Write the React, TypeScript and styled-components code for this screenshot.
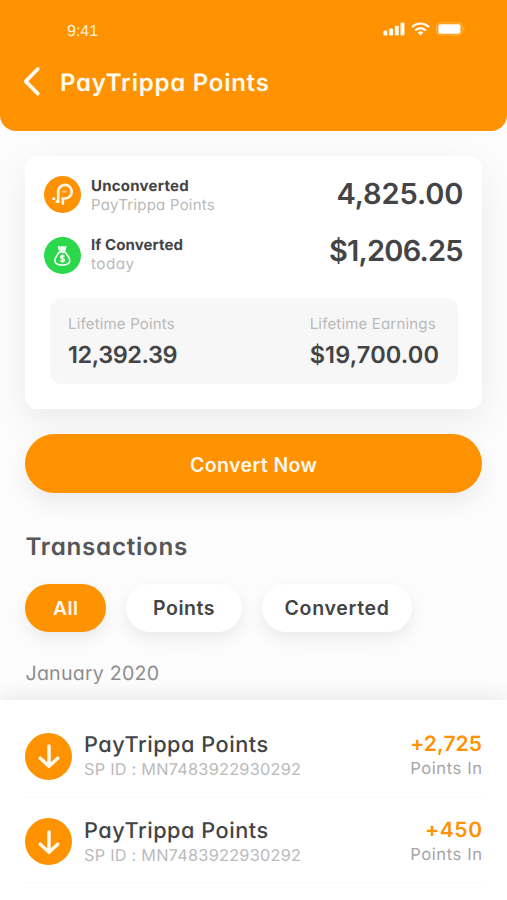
import React from "react";
import styled, { createGlobalStyle } from "styled-components";

const orange = "#ff9200";
const ink = "#434446";

const GlobalStyle = createGlobalStyle`
  * { box-sizing: border-box; }
  body {
    margin: 0;
    background: #fcfcfc;
    font-family: Inter, "Open Sans", sans-serif;
    font-feature-settings: "cv11";
    text-rendering: geometricPrecision;
    color: ${ink};
  }
  button { border: 0; padding: 0; background: none; font: inherit; font-feature-settings: inherit; color: inherit; }
  svg { display: block; flex: none; }
`;

const Screen = styled.main`
  width: 507px;
  height: 900px;
  overflow: hidden;
  display: flex;
  flex-direction: column;
`;

const Label = styled.span<{
  $size: number;
  $line: number;
  $weight?: number;
  $color?: string;
  $track?: number;
}>`
  display: block;
  white-space: nowrap;
  font-size: ${(p) => p.$size}px;
  line-height: ${(p) => p.$line}px;
  font-weight: ${(p) => p.$weight ?? 400};
  color: ${(p) => p.$color ?? ink};
  letter-spacing: ${(p) => p.$track ?? 0}px;
  margin-right: ${(p) => -(p.$track ?? 0)}px;
`;

const Header = styled.header`
  height: 131px;
  flex: none;
  background: ${orange};
  border-radius: 0 0 16px 16px;
`;

const StatusBar = styled.div`
  height: 63px;
  padding: 0 42px 0 67px;
  display: flex;
  justify-content: space-between;
  align-items: center;
`;

const Clock = styled.span`
  font: 16px/20px "Liberation Sans", sans-serif;
  color: #fff4dc;
`;

const StatusIcons = styled.div`
  display: flex;
  align-items: center;
  gap: 6px;
  margin-top: -5px;
`;

const TitleBar = styled.div`
  height: 40px;
  padding-left: 22px;
  display: flex;
  align-items: center;
  gap: 19px;
`;

const Title = styled.h1`
  margin: 0;
`;

const BackButton = styled.button`
  width: 19px;
  height: 32px;
  margin-top: -4px;
`;

const Body = styled.section`
  padding: 25px 25px 0;
  height: 568.5px;
  flex: none;
  display: flex;
  flex-direction: column;
`;

const SummaryCard = styled.div`
  height: 252.5px;
  flex: none;
  padding: 0 18.5px;
  background: #fff;
  border-radius: 12px;
  box-shadow: 0 12px 36px rgba(0, 0, 0, 0.07);
`;

const BalanceRow = styled.div<{ $height: number; $top: number }>`
  height: ${(p) => p.$height}px;
  padding-top: ${(p) => p.$top}px;
  display: flex;
  align-items: flex-start;
`;

const Badge = styled.div<{ $color: string; $drop: number }>`
  width: 37px;
  height: 37px;
  margin-top: ${(p) => p.$drop}px;
  border-radius: 50%;
  background: ${(p) => p.$color};
  overflow: hidden;
`;

const BalanceNames = styled.div`
  margin-left: 10.5px;
  flex: 1;
`;

const Lifetime = styled.div`
  height: 86px;
  margin: 0 6px 0 6.5px;
  padding: 16px 18.5px 0 18px;
  display: flex;
  justify-content: space-between;
  background: #f7f7f7;
  border-radius: 12px;
`;

const ConvertButton = styled.button`
  height: 59px;
  flex: none;
  margin-top: 25.5px;
  display: flex;
  justify-content: center;
  padding-top: 21px;
  border-radius: 30px;
  background: ${orange};
  box-shadow: 0 10px 22px rgba(0, 0, 0, 0.07);
`;

const SectionTitle = styled.h2`
  margin: 39px 0 0 0.5px;
  height: 51.5px;
`;

const Filters = styled.div`
  display: flex;
  gap: 19.5px;
`;

const Pill = styled.button<{ $width: number; $active?: boolean }>`
  width: ${(p) => p.$width}px;
  height: 48px;
  display: flex;
  align-items: center;
  justify-content: center;
  border-radius: 24px;
  background: ${(p) => (p.$active ? orange : "#fff")};
  box-shadow: 0 7px 16px rgba(0, 0, 0, 0.07);
`;

const Month = styled.div`
  margin: 29.5px 0 0 0.5px;
`;

const Transactions = styled.section`
  flex: 1;
  padding: 12.5px 25px 0;
  background: #fff;
  box-shadow: 0 -4px 18px rgba(0, 0, 0, 0.08);
`;

const TransactionRow = styled.div`
  height: 85.5px;
  padding-top: 20px;
  display: flex;
  align-items: flex-start;
  border-bottom: 1px solid #fafafa;
`;

const ArrowBadge = styled.div`
  width: 47px;
  height: 47px;
  margin-top: 0.75px;
  display: grid;
  place-items: center;
  border-radius: 50%;
  background: ${orange};
`;

const TransactionText = styled.div`
  flex: 1;
  margin-left: 12px;
`;

const Amount = styled.div`
  display: flex;
  flex-direction: column;
  align-items: flex-end;
`;

function Signal() {
  return (
    <svg width="22" height="14" viewBox="0 0 22 14" fill="#fffaf0">
      <rect x="0.4" y="8.5" width="4" height="5" rx="1.2" />
      <rect x="6.1" y="6.5" width="4" height="7" rx="1.2" />
      <rect x="11.8" y="3.8" width="4" height="9.7" rx="1.2" />
      <rect x="17.5" y="0.5" width="4" height="13" rx="1.2" />
    </svg>
  );
}

function Wifi() {
  return (
    <svg width="19" height="14" viewBox="0 0 19 14" fill="none" stroke="#fffaf0" strokeWidth="2.4">
      <path d="M1 5.2a12 12 0 0 1 17 0" />
      <path d="M4.1 8.5a7.6 7.6 0 0 1 10.8 0" />
      <path d="M9.5 13.5 6.6 10.6a4.1 4.1 0 0 1 5.8 0Z" fill="#fffaf0" stroke="none" />
    </svg>
  );
}

function Battery() {
  return (
    <svg width="29" height="14" viewBox="0 0 29 14">
      <rect x="0.6" y="0.9" width="25.6" height="12.2" rx="3.4" fill="none" stroke="#ffb84f" strokeWidth="1" />
      <rect x="2.3" y="2.3" width="22.2" height="9.4" rx="1.8" fill="#fff" />
      <path d="M27.3 5v4c1.6-.7 1.6-3.300 0-4Z" fill="#ffb84f" />
    </svg>
  );
}

function BrandMark() {
  return (
    <svg width="37" height="37" viewBox="0 0 112 112" fill="none" stroke="#fff5e2" strokeWidth="8">
      <path d="M43 82V48a20.500 20.500 0 1 1 21 20h-7V87" />
      <path d="M54 50v-5h15v5Z" fill="#ffc982" stroke="none" />
      <path d="M25 69h9M35 78h8" />
    </svg>
  );
}

function MoneyBag() {
  return (
    <svg width="37" height="37" viewBox="0 0 112 112" fill="none" stroke="#f1fff2" strokeWidth="5" strokeLinejoin="round">
      <path d="M43 28l6 3 6-3 6 3 6-3-3 12H46Z" fill="#f1fff2" strokeWidth="3" />
      <path d="M45 43h20M46 46C41 53 33 61 33 72c0 10 8 13 22 13s23-3 23-13c0-11-9-19-14-26Z" />
      <path d="M62 59c-3-3-12-3-12 2 0 6 12 3 12 9 0 5-9 5-13 1M56 53v25" strokeWidth="4.5" />
    </svg>
  );
}

function DownArrow() {
  return (
    <svg width="24" height="26" viewBox="0 0 24 26" fill="none" stroke="#fff8ec" strokeWidth="3.5" strokeLinecap="round" strokeLinejoin="round">
      <path d="M12 3v20M3.3 15.2l8.700 8.100 8.700-8.100" />
    </svg>
  );
}

const transactions = [
  { amount: "+2,725", track: 0.1 },
  { amount: "+450", track: 0.6 },
];

export default function App() {
  return (
    <Screen>
      <GlobalStyle />
      <Header>
        <StatusBar>
          <Clock>9:41</Clock>
          <StatusIcons>
            <Signal />
            <Wifi />
            <Battery />
          </StatusIcons>
        </StatusBar>
        <TitleBar>
          <BackButton aria-label="Back">
            <svg width="19" height="32" viewBox="0 0 19 32" fill="none" stroke="#fff8ec" strokeWidth="3.8" strokeLinecap="round" strokeLinejoin="round">
              <path d="M15.8 4 3.7 16.3 15.8 28.6" />
            </svg>
          </BackButton>
          <Title>
            <Label $size={24} $line={30} $weight={600} $color="#fffaf0" $track={0.76}>PayTrippa Points</Label>
          </Title>
        </TitleBar>
      </Header>

      <Body>
        <SummaryCard>
          <BalanceRow $height={77} $top={19}>
            <Badge $color={orange} $drop={0.5}>
              <BrandMark />
            </Badge>
            <BalanceNames>
              <Label $size={15} $line={22} $weight={700} $track={0.24}>Unconverted</Label>
              <Label $size={15} $line={16} $color="#b9b9b9" $track={0.22}>PayTrippa Points</Label>
            </BalanceNames>
            <Label $size={29} $line={37} $weight={600} $track={-0.08}>4,825.00</Label>
          </BalanceRow>
          <BalanceRow $height={65} $top={0}>
            <Badge $color="#2bd84c" $drop={4}>
              <MoneyBag />
            </Badge>
            <BalanceNames>
              <Label $size={15} $line={24} $weight={700} $track={0.1}>If Converted</Label>
              <Label $size={15.3} $line={13} $color="#b9b9b9" $track={0.45}>today</Label>
            </BalanceNames>
            <Label $size={29} $line={36} $weight={600} $track={-0.78}>$1,206.25</Label>
          </BalanceRow>
          <Lifetime>
            <div>
              <Label $size={15} $line={20} $color="#b9b9b9" $track={0.17}>Lifetime Points</Label>
              <Label $size={23.5} $line={42} $weight={600} $track={-0.45}>12,392.39</Label>
            </div>
            <div>
              <Label $size={15} $line={20} $color="#b9b9b9" $track={0.17}>Lifetime Earnings</Label>
              <Label $size={23.5} $line={42} $weight={600} $track={0.15}>$19,700.00</Label>
            </div>
          </Lifetime>
        </SummaryCard>

        <ConvertButton>
          <Label $size={19.5} $line={20} $weight={600} $color="#fff8ec" $track={0.38}>Convert Now</Label>
        </ConvertButton>

        <SectionTitle>
          <Label $size={24.2} $line={30} $weight={600} $color="#555658" $track={0.74}>Transactions</Label>
        </SectionTitle>

        <Filters>
          <Pill $width={81} $active>
            <Label $size={19.3} $line={24} $weight={600} $color="#fff8ec" $track={0.4}>All</Label>
          </Pill>
          <Pill $width={116.5}>
            <Label $size={19.5} $line={24} $weight={600} $track={0.5}>Points</Label>
          </Pill>
          <Pill $width={150.5}>
            <Label $size={19.5} $line={24} $weight={600} $track={0.67}>Converted</Label>
          </Pill>
        </Filters>

        <Month>
          <Label $size={19.6} $line={24} $color="#8e8e8e" $track={0.22}>January 2020</Label>
        </Month>
      </Body>

      <Transactions>
        {transactions.map((t) => (
          <TransactionRow key={t.amount}>
            <ArrowBadge>
              <DownArrow />
            </ArrowBadge>
            <TransactionText>
              <Label $size={21.7} $line={26} $weight={500} $track={0.53}>PayTrippa Points</Label>
              <Label $size={16.3} $line={23} $color="#bababa" $track={0.24}>SP ID : MN7483922930292</Label>
            </TransactionText>
            <Amount>
              <Label $size={21} $line={26} $weight={600} $color={orange} $track={t.track}>{t.amount}</Label>
              <Label $size={16.6} $line={23} $color="#a6a6a6" $track={0.57}>Points In</Label>
            </Amount>
          </TransactionRow>
        ))}
      </Transactions>
    </Screen>
  );
}
